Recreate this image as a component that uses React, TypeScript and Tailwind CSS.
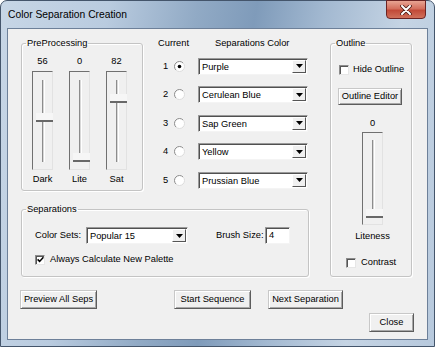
import React from 'react';

const ui = "font-['Liberation_Sans',Arial,sans-serif]";

function Radio({ checked }: { checked?: boolean }) {
  return (
    <svg width="11" height="11" viewBox="0 0 11 11">
      <circle cx="5.5" cy="5.5" r="5" fill="#fff" />
      <path d="M9.04 1.96 A5 5 0 0 0 1.96 9.04" stroke="#8a8a8a" fill="none" />
      <path d="M1.96 9.04 A5 5 0 0 0 9.04 1.96" stroke="#dcdcdc" fill="none" />
      {checked && <circle cx="5.5" cy="5.5" r="1.8" fill="#000" />}
    </svg>
  );
}

function Check({ checked }: { checked?: boolean }) {
  return (
    <div className="w-[10px] h-[10px] bg-white border border-t-[#8c8c8c] border-l-[#8c8c8c] border-r-[#e6e6e6] border-b-[#e6e6e6] shadow-[inset_1px_1px_0_#555] flex items-center justify-center">
      {checked && (
        <svg width="7" height="7" viewBox="0 0 7 7">
          <path d="M0.6 3.4 L2.6 5.4 L6.4 1.2" stroke="#000" strokeWidth="1.5" fill="none" />
        </svg>
      )}
    </div>
  );
}

function Combo({ value, w }: { value: string; w: string }) {
  return (
    <div className={`${w} h-[17px] flex bg-white border border-t-[#9a9a9a] border-l-[#9a9a9a] border-r-[#f4f4f4] border-b-[#f4f4f4] shadow-[inset_1px_1px_0_#505050]`}>
      <div className="flex-1 pl-[3px] pt-[1px] leading-[14px] whitespace-nowrap">{value}</div>
      <div className="w-[14px] h-[13px] mt-[1px] mr-[1px] bg-[#f0f0f0] border border-t-white border-l-white border-r-[#555] border-b-[#555] flex items-center justify-center">
        <svg width="7" height="4" viewBox="0 0 7 4">
          <path d="M0 0 H7 L3.5 4 Z" fill="#000" />
        </svg>
      </div>
    </div>
  );
}

function Button({ label, w, h = 'h-[19px]' }: { label: string; w: string; h?: string }) {
  return (
    <div className={`${w} ${h} bg-[#f0f0f0] border border-t-[#c8c8c8] border-l-[#c8c8c8] border-r-[#5c5c5c] border-b-[#5c5c5c] shadow-[inset_1px_1px_0_#fff,inset_-1px_-1px_0_#a8a8a8] flex items-center justify-center whitespace-nowrap`}>
      {label}
    </div>
  );
}

function Slider({ h, thumb, trackTop }: { h: string; thumb: number; trackTop: string }) {
  return (
    <div className={`relative w-[21px] ${h} border border-t-[#707070] border-l-[#707070] border-r-[#e2e2e2] border-b-[#e2e2e2]`}>
      <div className={`absolute left-[9px] ${trackTop} bottom-[7px] w-[3px] border-l border-l-[#8c8c8c] border-r border-r-white bg-[#d8d8d8]`} />
      <div className="absolute left-[3px] right-[-1px] h-[9px] bg-[#f6f6f6] border-b-2 border-b-[#686868]" style={{ top: thumb }} />
    </div>
  );
}

function PreSlider({ value, label }: { value: number; label: string }) {
  return (
    <div className="w-[21px] flex flex-col items-center">
      <div className="h-[11px] whitespace-nowrap">{value}</div>
      <div className="mt-[4px]">
        <Slider h="h-[99px]" trackTop="top-[8px]" thumb={81 - 0.714 * value} />
      </div>
      <div className="mt-[4px] h-[11px] whitespace-nowrap">{label}</div>
    </div>
  );
}

const groupCls =
  'border border-[#c4c4c4] rounded-[3px] shadow-[inset_1px_1px_0_#fff,1px_1px_0_#fff]';
const legendCls = 'ml-[4px] px-[1px] leading-[11px]';

const seps = ['Purple', 'Cerulean Blue', 'Sap Green', 'Yellow', 'Prussian Blue'];

export default function App() {
  return (
    <div className={`w-[435px] h-[347px] bg-white ${ui} text-[9.3px] leading-[11px] text-black`}>
      <div className="w-full h-full flex flex-col rounded-t-[7px] border border-[#44556b] bg-[linear-gradient(100deg,#c7d6e6_0%,#b9cbdf_22%,#91aac5_40%,#7f9bba_52%,#a3b9d1_66%,#c5d4e4_82%,#b7c9dd_100%)]">
        <div className="h-[27px] flex justify-between items-start">
          <div className="pl-[7px] pt-[8px] text-[10.3px] leading-[12px]">Color Separation Creation</div>
          <div className="mr-[8px] mt-[-1px] w-[40px] h-[19px] rounded-b-[4px] border border-[#6b2323] bg-[linear-gradient(180deg,#e8a493_0%,#d46f5d_45%,#c24a38_55%,#d0705a_100%)] flex items-center justify-center">
            <svg width="12" height="10" viewBox="0 0 12 10">
              <path d="M2 1 L10 9 M10 1 L2 9" stroke="#4a1a14" strokeWidth="3.6" strokeLinecap="round" />
              <path d="M2 1 L10 9 M10 1 L2 9" stroke="#fff" strokeWidth="2" strokeLinecap="round" />
            </svg>
          </div>
        </div>
        <div className="ml-[6px] w-[421px] h-[312px] bg-[#f0f0f0] border border-[#6d8099]">
          <div className="mt-[9px] ml-[13px] flex items-start">
            <div className="w-[288px] flex flex-col">
              <div className="flex">
                <fieldset className={`w-[122px] h-[153px] ${groupCls}`}>
                  <legend className={legendCls}>PreProcessing</legend>
                  <div className="mt-[6.5px] pl-[10px] flex gap-[16px]">
                    <PreSlider value={56} label="Dark" />
                    <PreSlider value={0} label="Lite" />
                    <PreSlider value={82} label="Sat" />
                  </div>
                </fieldset>
                <div className="w-[166px] flex flex-col">
                  <div className="h-[11px] pl-[15px] flex">
                    <div className="w-[57px]">Current</div>
                    <div>Separations Color</div>
                  </div>
                  <div className="mt-[8.5px] flex flex-col gap-[11.5px]">
                    {seps.map((s, i) => (
                      <div key={s} className="h-[17px] pl-[20px] flex items-center">
                        <div className="w-[11px]">{i + 1}</div>
                        <Radio checked={i === 0} />
                        <div className="ml-[13px]">
                          <Combo value={s} w="w-[110px]" />
                        </div>
                      </div>
                    ))}
                  </div>
                </div>
              </div>
              <fieldset className={`mt-[12.5px] w-[288px] h-[73.5px] ${groupCls}`}>
                <legend className={legendCls}>Separations</legend>
                <div className="mt-[12.5px] pl-[13px] flex items-center">
                  <div className="w-[51px]">Color Sets:</div>
                  <Combo value="Popular 15" w="w-[102px]" />
                  <div className="ml-[28px] w-[49px]">Brush Size:</div>
                  <div className="w-[25px] h-[17px] bg-white border border-t-[#9a9a9a] border-l-[#9a9a9a] border-r-[#f4f4f4] border-b-[#f4f4f4] shadow-[inset_1px_1px_0_#505050] pl-[3px] leading-[15px]">
                    4
                  </div>
                </div>
                <div className="mt-[10px] pl-[13px] h-[11px] flex items-center">
                  <Check checked />
                  <div className="ml-[5px]">Always Calculate New Palette</div>
                </div>
              </fieldset>
            </div>
            <fieldset className={`ml-[21px] w-[82px] h-[239px] ${groupCls}`}>
              <legend className={legendCls}>Outline</legend>
              <div className="mt-[15px] pl-[8px] h-[11px] flex items-center">
                <Check />
                <div className="ml-[4px]">Hide Outline</div>
              </div>
              <div className="mt-[12.5px] ml-[7px]">
                <Button label="Outline Editor" w="w-[64px]" h="h-[17px]" />
              </div>
              <div className="mt-[13px] ml-[31px] w-[21px] flex flex-col items-center">
                <div className="h-[11px]">0</div>
                <div className="mt-[3.5px]">
                  <Slider h="h-[93px]" trackTop="top-[7px]" thumb={76} />
                </div>
                <div className="mt-[6px] h-[11px] whitespace-nowrap">Liteness</div>
              </div>
              <div className="mt-[15px] pl-[15px] h-[11px] flex items-center">
                <Check />
                <div className="ml-[5px]">Contrast</div>
              </div>
            </fieldset>
          </div>
          <div className="mt-[13px] ml-[12px] flex">
            <Button label="Preview All Seps" w="w-[77px]" />
            <div className="ml-[77px]">
              <Button label="Start Sequence" w="w-[77px]" />
            </div>
            <div className="ml-[17px]">
              <Button label="Next Separation" w="w-[75px]" />
            </div>
          </div>
          <div className="mt-[4px] mr-[13px] flex justify-end">
            <Button label="Close" w="w-[45px]" />
          </div>
        </div>
      </div>
    </div>
  );
}
